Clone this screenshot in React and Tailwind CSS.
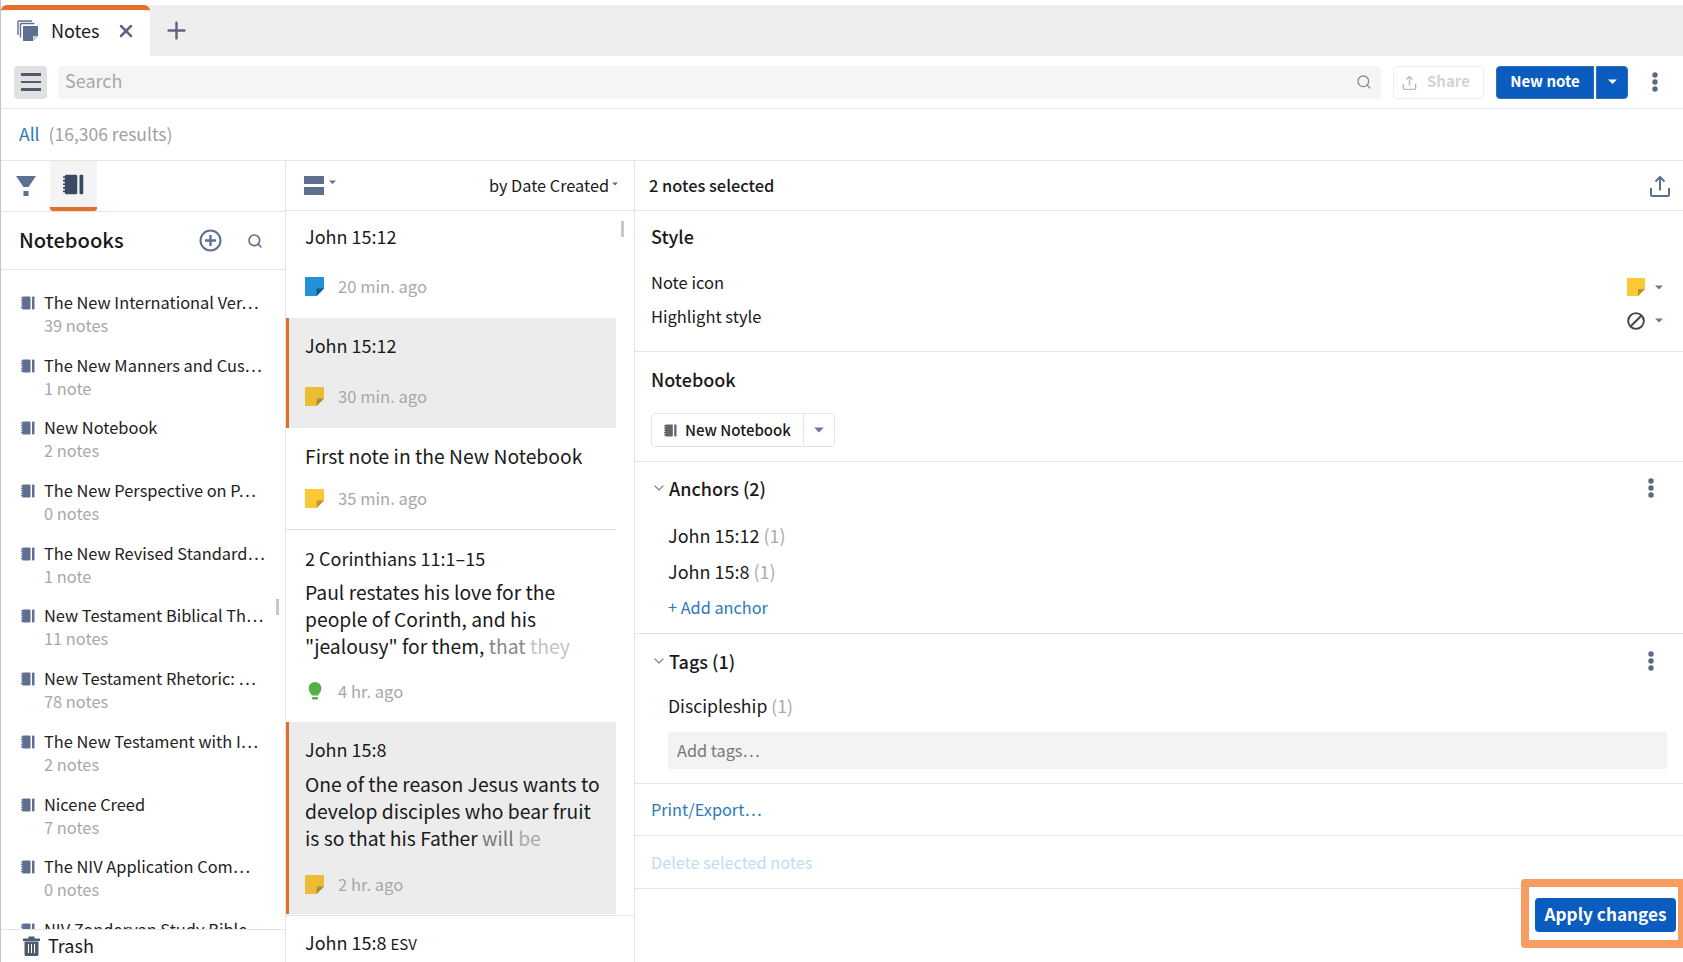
import React from 'react';
import { X, Plus, Search, ChevronDown } from 'lucide-react';

const Caret = ({ className = 'text-[#6b7890]', size = 8 }) => (
    <svg width={size} height={size / 2 + 1} viewBox="0 0 8 5" className={className}>
        <path d="M0 0.5H8L4 4.5Z" fill="currentColor" />
    </svg>
);

const NotebookIcon = ({ color = '#5f6f92', size = 14 }) => (
    <svg width={size} height={size} viewBox="0 0 14 14" className="shrink-0">
        <rect x="1.2" y="0.5" width="8.3" height="13" rx="1" fill={color} />
        <rect x="11" y="0.5" width="2.5" height="13" rx="0.8" fill={color} />
        <path d="M0 2H1.5M0 4.4H1.5M0 6.8H1.5M0 9.2H1.5M0 11.6H1.5" stroke={color} strokeWidth="1.1" />
    </svg>
);

const NoteIcon = ({ color, fold, size = 19 }) => (
    <svg width={size} height={size} viewBox="0 0 18 18" className="shrink-0">
        <path d="M0 0H18V11L11 18H0Z" fill={color} />
        <path d="M18 11H11V18Z" fill={fold} />
    </svg>
);

const BulbIcon = () => (
    <svg width={18} height={20} viewBox="0 0 18 20" className="shrink-0">
        <path d="M9 1a6.4 6.4 0 0 0-6.4 6.4c0 3 2.3 4.4 3.2 7.1h6.4c.9-2.7 3.2-4.1 3.2-7.1A6.4 6.4 0 0 0 9 1Z" fill="#55b047" />
        <rect x="6" y="16" width="6" height="2.6" rx="1" fill="#55b047" />
    </svg>
);

const Kebab = () => (
    <svg width={6} height={20} viewBox="0 0 6 20">
        <circle cx="3" cy="3" r="2.7" fill="#5b6880" />
        <circle cx="3" cy="10" r="2.7" fill="#5b6880" />
        <circle cx="3" cy="17" r="2.7" fill="#5b6880" />
    </svg>
);

const ShareIcon = ({ color, size = 22 }) => (
    <svg width={size} height={size} viewBox="0 0 22 22" fill="none" stroke={color} strokeWidth="2">
        <path d="M2 13V19.5a1.5 1.5 0 0 0 1.5 1.5h15a1.5 1.5 0 0 0 1.5-1.5V13" />
        <path d="M11 15.5V2M6.5 6.5L11 2l4.5 4.5" />
    </svg>
);

const notebooks = [
    ['The New International Ver…', '39 notes'],
    ['The New Manners and Cus…', '1 note'],
    ['New Notebook', '2 notes'],
    ['The New Perspective on P…', '0 notes'],
    ['The New Revised Standard…', '1 note'],
    ['New Testament Biblical Th…', '11 notes'],
    ['New Testament Rhetoric: …', '78 notes'],
    ['The New Testament with I…', '2 notes'],
    ['Nicene Creed', '7 notes'],
    ['The NIV Application Com…', '0 notes'],
    ['NIV Zondervan Study Bible', ''],
];

const yellow = <NoteIcon color="#fbc935" fold="#b8962f" />;
const yellowSel = <NoteIcon color="#ecbc34" fold="#a98d3a" />;

const NoteMeta = ({ icon, time }) => (
    <div className="flex items-center gap-[14px] h-[24px]">
        <span className="w-[19px] flex justify-center">{icon}</span>
        <span className="text-[16.6px] text-[#a8a8a8]">{time}</span>
    </div>
);

const NotesList = () => (
    <div className="flex-1 overflow-hidden relative">
        <div className="absolute right-[10px] top-[10px] w-[3px] h-[16px] bg-[#c8c8c8]" />
        <div className="h-[107px] w-[330px] pl-[19px] pt-[13px]">
            <div className="text-[18px] leading-[24px] text-[#1a1a1a]">John 15:12</div>
            <div className="mt-[26px]"><NoteMeta icon={<NoteIcon color="#2490d8" fold="#14578c" />} time="20 min. ago" /></div>
        </div>
        <div className="h-[110px] w-[330px] pl-[16px] pt-[15px] bg-[#ececec] border-l-[3px] border-[#e2702a]">
            <div className="text-[18px] leading-[24px] text-[#1a1a1a]">John 15:12</div>
            <div className="mt-[27px]"><NoteMeta icon={yellowSel} time="30 min. ago" /></div>
        </div>
        <div className="h-[102px] w-[330px] pl-[19px] pt-[15px] border-b border-[#e5e5e5]">
            <div className="text-[19.3px] leading-[26px] text-[#1a1a1a]">First note in the New Notebook</div>
            <div className="mt-[17px]"><NoteMeta icon={yellow} time="35 min. ago" /></div>
        </div>
        <div className="h-[192px] w-[330px] pl-[19px] pt-[16px]">
            <div className="text-[18px] leading-[24px] text-[#1a1a1a]">2 Corinthians 11:1–15</div>
            <div className="mt-[9px] text-[19.3px] leading-[27px] text-[#1a1a1a]">
                Paul restates his love for the<br />people of Corinth, and his<br />"jealousy" for them, <span className="text-[#888]">that</span> <span className="text-[#c4c4c4]">they</span>
            </div>
            <div className="mt-[19px]"><NoteMeta icon={<BulbIcon />} time="4 hr. ago" /></div>
        </div>
        <div className="h-[192px] w-[330px] pl-[16px] pt-[15px] bg-[#ececec] border-l-[3px] border-[#e2702a]">
            <div className="text-[18px] leading-[24px] text-[#1a1a1a]">John 15:8</div>
            <div className="mt-[10px] text-[19.3px] leading-[27px] text-[#1a1a1a]">
                One of the reason Jesus wants to<br />develop disciples who bear fruit<br />is so that his Father <span className="text-[#777]">will</span> <span className="text-[#aaa]">be</span>
            </div>
            <div className="mt-[20px]"><NoteMeta icon={yellowSel} time="2 hr. ago" /></div>
        </div>
        <div className="border-t border-[#e5e5e5] mt-[1px] pl-[19px] pt-[14px] text-[18px] leading-[24px] text-[#1a1a1a]">
            John 15:8 <span className="text-[15px]">ESV</span>
        </div>
    </div>
);

const App = () => (
    <div className="h-screen w-full overflow-hidden bg-white flex flex-col border-l border-[#c4c4c4] pt-[5px] text-[#1a1a1a] font-['Noto_Sans_CJK_SC','Source_Sans_Pro','Liberation_Sans',sans-serif]">
        {/* tab strip */}
        <div className="h-[51px] shrink-0 flex bg-[#eeeeee]">
            <div className="w-[149px] bg-white border-t-[5px] border-[#e2702a] rounded-t-[6px] flex items-center pl-[16px] pb-[5px]">
                <svg width={22} height={22} viewBox="0 0 22 22">
                    <path d="M1 1h14M1 1v14M3.5 3.5h14M3.5 3.5v14" stroke="#5f6f92" strokeWidth="1.4" fill="none" />
                    <path d="M6 6h15v10l-5 5H6Z" fill="#5f6f92" />
                    <path d="M21 16h-5v5Z" fill="#c9cfdb" />
                </svg>
                <span className="ml-[12px] text-[18px]">Notes</span>
                <X size={20} strokeWidth={3} className="ml-[16px] text-[#5b6880]" />
            </div>
            <div className="flex-1 flex items-center pl-[13px]">
                <Plus size={27} strokeWidth={2.2} className="text-[#5b6880]" />
            </div>
        </div>
        <div className="h-[53px] shrink-0 flex items-center pl-[13px] pr-[25px] border-b border-[#e5e5e5]">
            <div className="w-[33px] h-[33px] rounded-[4px] bg-[#e1e1e1] flex flex-col justify-center items-center gap-[5px]">
                <span className="w-[20px] h-[2.5px] bg-[#4d5a70]" />
                <span className="w-[20px] h-[2.5px] bg-[#4d5a70]" />
                <span className="w-[20px] h-[2.5px] bg-[#4d5a70]" />
            </div>
            <div className="ml-[11px] flex-1 h-[33px] rounded-[4px] bg-[#f5f5f5] flex items-center justify-between pl-[7px] pr-[9px]">
                <span className="text-[18px] text-[#a8a8a8] pb-[4px]">Search</span>
                <Search size={16} strokeWidth={2} className="text-[#8c8c8c]" />
            </div>
            <div className="ml-[12px] w-[91px] h-[33px] rounded-[4px] border border-[#eeeeee] flex items-center pl-[8px] gap-[10px]">
                <ShareIcon color="#b4bac6" size={15} />
                <span className="text-[15px] font-semibold text-[#d4d4d4] pb-[2px]">Share</span>
            </div>
            <div className="ml-[12px] w-[98px] h-[33px] rounded-l-[4px] bg-[#0b5cbf] border border-[#2f6fb8] flex items-center justify-center text-[15px] font-bold text-white pb-[2px]">New note</div>
            <div className="ml-[2px] w-[32px] h-[33px] rounded-r-[4px] bg-[#0b5cbf] border border-[#2f6fb8] flex items-center justify-center">
                <Caret className="text-white" size={9} />
            </div>
            <div className="ml-[24px]"><Kebab /></div>
        </div>
        <div className="h-[52px] shrink-0 flex items-center pl-[18px] text-[17.5px] border-b border-[#e5e5e5]">
            <span className="text-[#2a7ab8]">All</span>
            <span className="ml-[9px] text-[#a0a0a0]">(16,306 results)</span>
        </div>

        <div className="flex-1 flex min-h-0">
            {/* notebooks column */}
            <div className="w-[285px] shrink-0 flex flex-col border-r border-[#e5e5e5]">
                <div className="h-[51px] shrink-0 flex pl-[2px] border-b border-[#e5e5e5]">
                    <div className="w-[47px] flex items-center justify-center pr-[2px]">
                        <svg width={20} height={20} viewBox="0 0 20 20">
                            <path d="M0 0H20L12.5 11H7.5Z" fill="#5f6f92" />
                            <rect x="7.5" y="15" width="5" height="5" fill="#5f6f92" />
                        </svg>
                    </div>
                    <div className="w-[47px] bg-[#f4f4f4] flex items-center justify-center border-b-[4px] border-[#e2702a] rounded-b-[3px]">
                        <NotebookIcon color="#3b4a63" size={21} />
                    </div>
                </div>
                <div className="h-[58px] shrink-0 flex items-center pl-[18px] pr-[22px] border-b border-[#e5e5e5]">
                    <span className="text-[20.2px] font-medium">Notebooks</span>
                    <svg width={23} height={23} viewBox="0 0 23 23" fill="none" stroke="#5f6f92" className="ml-auto">
                        <circle cx="11.5" cy="11.5" r="10" strokeWidth="2" />
                        <path d="M11.5 6v11M6 11.5h11" strokeWidth="2.4" />
                    </svg>
                    <Search size={16} strokeWidth={2.4} className="ml-[25px] text-[#5f6f92]" />
                </div>
                <div className="flex-1 min-h-0 overflow-hidden pt-[20px] relative">
                    <div className="absolute right-[6px] top-[329px] w-[3px] h-[16px] bg-[#c8c8c8]" />
                    {notebooks.map(([title, count]) => (
                        <div key={title} className="h-[62.7px] pl-[20px] flex">
                            <div className="mt-[6px]"><NotebookIcon /></div>
                            <div className="ml-[9px]">
                                <div className="text-[16.4px] leading-[24px] text-[#222]">{title}</div>
                                {count && <div className="text-[16.4px] leading-[22px] text-[#a8a8a8]">{count}</div>}
                            </div>
                        </div>
                    ))}
                </div>
                <div className="h-[33px] shrink-0 border-t border-[#e5e5e5] flex items-center pl-[22px] bg-white">
                    <svg width={17} height={20} viewBox="0 0 17 20" className="shrink-0">
                        <path d="M0 2.5H17V5H0ZM5.5 2.5V0.6H11.5V2.5Z" fill="#4d5a70" />
                        <path d="M1.5 5.5H15.5V18.5a1.5 1.5 0 0 1-1.5 1.5H3a1.5 1.5 0 0 1-1.5-1.5Z" fill="#4d5a70" />
                        <path d="M5.5 8V17M8.5 8V17M11.5 8V17" stroke="#fff" strokeWidth="1" />
                    </svg>
                    <span className="ml-[8px] text-[18px] pb-[2px]">Trash</span>
                </div>
            </div>

            {/* notes column */}
            <div className="w-[349px] shrink-0 flex flex-col border-r border-[#e5e5e5]">
                <div className="h-[50px] shrink-0 flex items-center justify-between pl-[18px] pr-[16px] border-b border-[#e5e5e5]">
                    <div className="flex items-center gap-[5px]">
                        <svg width={20} height={19} viewBox="0 0 20 19">
                            <rect width="20" height="8" fill="#5f6f92" />
                            <rect y="11" width="20" height="8" fill="#5f6f92" />
                        </svg>
                        <Caret className="text-[#5f6f92] mb-[6px]" size={7} />
                    </div>
                    <div className="flex items-center gap-[3px]">
                        <span className="text-[16.3px]">by Date Created</span>
                        <Caret className="text-[#5f6f92] mb-[4px]" size={6} />
                    </div>
                </div>
                <NotesList />
            </div>

            {/* detail pane */}
            <div className="flex-1 flex flex-col min-w-0 relative">
                <div className="h-[50px] shrink-0 flex items-center justify-between pl-[14px] pr-[12px] border-b border-[#e5e5e5]">
                    <span className="text-[16.4px] font-medium">2 notes selected</span>
                    <ShareIcon color="#5f6f92" />
                </div>
                <div className="h-[141px] shrink-0 border-b border-[#e5e5e5] pl-[16px] pr-[20px] pt-[12px]">
                    <div className="text-[18px] leading-[26px] font-medium">Style</div>
                    <div className="mt-[21px] flex items-center justify-between h-[24px]">
                        <span className="text-[16.5px]">Note icon</span>
                        <div className="flex items-center gap-[10px] mt-[10px]"><NoteIcon color="#fbc935" fold="#b8962f" size={18} /><Caret /></div>
                    </div>
                    <div className="mt-[10px] flex items-center justify-between h-[24px]">
                        <span className="text-[16.5px]">Highlight style</span>
                        <div className="flex items-center gap-[10px] mt-[9px]">
                            <svg width={18} height={18} viewBox="0 0 17 17" fill="none" stroke="#444" strokeWidth="1.8">
                                <circle cx="8.5" cy="8.5" r="7.4" />
                                <path d="M3.5 13.5L13.5 3.5" />
                            </svg>
                            <Caret />
                        </div>
                    </div>
                </div>
                <div className="h-[110px] shrink-0 border-b border-[#e5e5e5] pl-[16px] pt-[14px]">
                    <div className="text-[18px] leading-[26px] font-medium">Notebook</div>
                    <div className="mt-[21px] w-[184px] h-[34px] rounded-[4px] border border-[#e5e5e5] flex items-center">
                        <div className="w-[152px] flex items-center pl-[12px] gap-[8px] h-full border-r border-[#e5e5e5]">
                            <NotebookIcon color="#666" size={13} />
                            <span className="text-[15px] font-medium">New Notebook</span>
                        </div>
                        <div className="flex-1 flex justify-center"><Caret className="text-[#6b7890]" size={10} /></div>
                    </div>
                </div>
                <div className="h-[172px] shrink-0 border-b border-[#e5e5e5] pl-[16px] pr-[29px] pt-[13px]">
                    <div className="flex items-center justify-between h-[26px]">
                        <div className="flex items-center">
                            <ChevronDown size={16} strokeWidth={1.8} className="text-[#888]" />
                            <span className="ml-[2px] text-[18px] font-medium">Anchors (2)</span>
                        </div>
                        <Kebab />
                    </div>
                    <div className="mt-[16px] pl-[17px] text-[18px] leading-[36px]">
                        <div>John 15:12 <span className="text-[#aaa]">(1)</span></div>
                        <div>John 15:8 <span className="text-[#aaa]">(1)</span></div>
                        <div className="text-[#2a7ab8] text-[16.3px]">+ Add anchor</div>
                    </div>
                </div>
                <div className="h-[150px] shrink-0 border-b border-[#e5e5e5] pl-[16px] pr-[29px] pt-[14px]">
                    <div className="flex items-center justify-between h-[26px]">
                        <div className="flex items-center">
                            <ChevronDown size={16} strokeWidth={1.8} className="text-[#888]" />
                            <span className="ml-[2px] text-[18px] font-medium">Tags (1)</span>
                        </div>
                        <Kebab />
                    </div>
                    <div className="mt-[19px] pl-[17px] text-[17.6px] leading-[26px]">Discipleship <span className="text-[#aaa]">(1)</span></div>
                    <div className="mt-[13px] ml-[17px] mr-[-13px] h-[37px] bg-[#f3f3f3] flex items-center pl-[9px] text-[16.3px] text-[#777]">Add tags…</div>
                </div>
                <div className="h-[52px] shrink-0 border-b border-[#e5e5e5] pl-[16px] flex items-center text-[16.3px] text-[#2a7ab8]">Print/Export…</div>
                <div className="h-[53px] shrink-0 border-b border-[#e5e5e5] pl-[16px] flex items-center text-[16.3px] text-[#bfdcef]">Delete selected notes</div>
                <div className="flex-1 flex justify-end relative">
                    <div className="absolute right-0 top-[-10px] w-[162px] h-[69px] border-[8px] border-r-[5px] border-[#f79d62] rounded-l-[4px] bg-white">
                        <div className="ml-[6px] mt-[11px] w-[141px] h-[34px] rounded-[4px] bg-[#0b5cbf] flex items-center justify-center text-[17.2px] font-semibold text-white pb-[2px]">Apply changes</div>
                    </div>
                </div>
            </div>
        </div>
    </div>
);

export default App;
